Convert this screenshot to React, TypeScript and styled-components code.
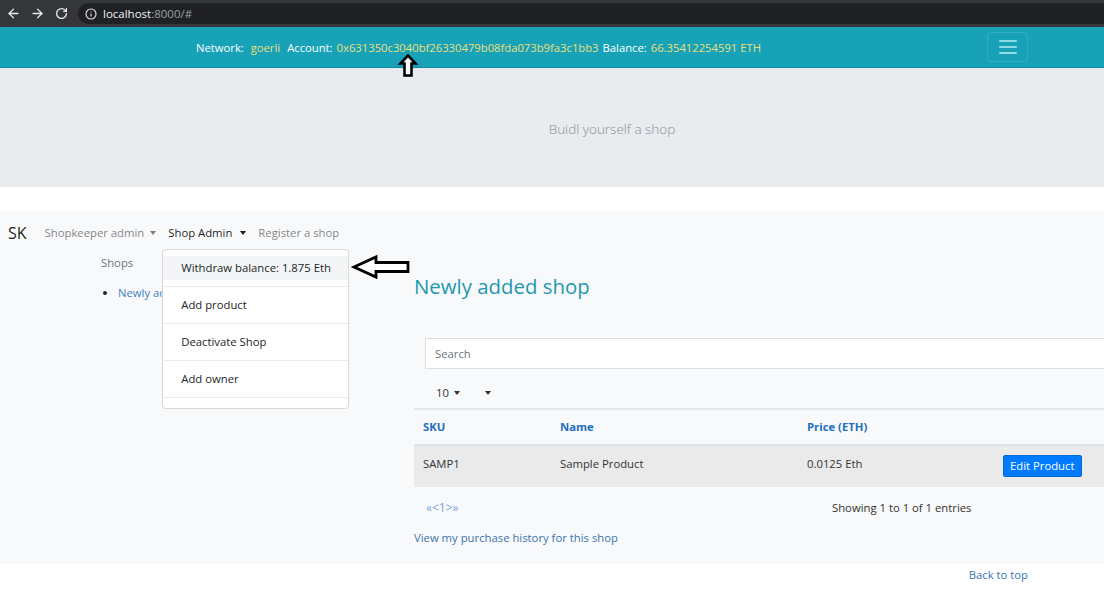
import React from 'react';
import styled, { createGlobalStyle } from 'styled-components';
import { ArrowLeft, ArrowRight, RotateCw, Info } from 'lucide-react';

const GlobalStyle = createGlobalStyle`
  html, body {
    margin: 0;
    padding: 0;
  }
  body {
    width: 1104px;
    height: 596px;
    overflow: hidden;
    background: #fff;
    color: #212529;
    font-family: 'Open Sans', 'Noto Sans', sans-serif;
    font-size: 11.3px;
  }
  * {
    box-sizing: border-box;
  }
`;

const Page = styled.div`
  position: relative;
  width: 1104px;
`;

/* browser chrome */
const BrowserBar = styled.div`
  height: 27px;
  background: #35363a;
  display: flex;
  align-items: center;
  padding-left: 1px;
`;

const ChromeButton = styled.span`
  width: 24px;
  display: flex;
  justify-content: center;
  color: #e8eaed;
`;

const Omnibox = styled.div`
  flex: 1;
  height: 21px;
  margin-left: 5px;
  border-radius: 11px 0 0 11px;
  background: #202124;
  display: flex;
  align-items: center;
  gap: 6px;
  padding-left: 7px;
  color: #e8eaed;
  font-size: 11.5px;
`;

const Host = styled.span`
  color: #f1f3f4;
`;

const UrlRest = styled.span`
  color: #9aa0a6;
`;

/* top navbar */
const TopNav = styled.nav`
  height: 41px;
  background: #17a2b8;
  border-bottom: 1px solid #12899c;
  display: flex;
  align-items: center;
  padding: 0 76px 0 196px;
  color: #fff;
  font-size: 11.25px;
`;

const NavLabel = styled.span`
  margin-right: 4px;
`;

const NavValue = styled.span<{ $gap?: number }>`
  color: #ecdf78;
  margin-right: ${(p) => p.$gap ?? 4}px;
`;

const Toggler = styled.button`
  margin-left: auto;
  width: 41px;
  height: 30px;
  padding: 0;
  border: 1px solid rgba(255, 255, 255, 0.12);
  border-radius: 4px;
  background: transparent;
  display: flex;
  flex-direction: column;
  align-items: center;
  justify-content: center;
  gap: 4px;
`;

const TogglerBar = styled.span`
  width: 18px;
  height: 2px;
  border-radius: 1px;
  background: #8fdbe6;
`;

/* jumbotron */
const Jumbotron = styled.header`
  height: 119px;
  background: #e9ecef;
  display: flex;
  align-items: center;
  justify-content: center;
  padding: 3px 0 0 120px;
`;

const Lead = styled.p`
  margin: 0;
  font-size: 13.5px;
  font-weight: 300;
  color: #868e96;
`;

/* shop section */
const ShopSection = styled.section`
  margin-top: 24px;
  background: #f8f9fa;
  padding-bottom: 18px;
`;

const NavRow = styled.div`
  display: flex;
  align-items: center;
  padding: 8px 0 8px 8px;
`;

const Brand = styled.span`
  font-size: 16px;
  line-height: 20px;
  color: rgba(0, 0, 0, 0.9);
  margin-right: 12px;
`;

const NavItem = styled.div`
  position: relative;
`;

const NavLink = styled.a<{ $active?: boolean }>`
  display: flex;
  align-items: center;
  padding: 6px;
  line-height: 16px;
  color: ${(p) => (p.$active ? 'rgba(0, 0, 0, 0.9)' : 'rgba(0, 0, 0, 0.5)')};
  text-decoration: none;
  white-space: nowrap;
  cursor: pointer;
`;

const Caret = styled.span<{ $gap?: number }>`
  display: inline-block;
  margin-left: ${(p) => p.$gap ?? 6}px;
  border-top: 4px solid currentColor;
  border-left: 3.5px solid transparent;
  border-right: 3.5px solid transparent;
`;

const Dropdown = styled.div`
  position: absolute;
  top: calc(100% + 2px);
  left: 0;
  z-index: 10;
  width: 187px;
  background: #fff;
  border: 1px solid rgba(0, 0, 0, 0.15);
  border-radius: 4px;
`;

const DropItem = styled.div`
  padding: 6px 0;
  border-bottom: 1px solid #e9ecef;
`;

const DropLink = styled.a<{ $active?: boolean }>`
  display: block;
  padding: 4px 18px;
  line-height: 16px;
  white-space: nowrap;
  color: #212529;
  text-decoration: none;
  background: ${(p) => (p.$active ? '#f4f5f6' : 'transparent')};
`;

const DropTail = styled.div`
  height: 10px;
`;

const ContentRow = styled.div`
  display: flex;
`;

const Sidebar = styled.aside`
  width: 414px;
  flex-shrink: 0;
  padding-left: 101px;
`;

const SidebarTitle = styled.div`
  line-height: 16px;
  color: #6c757d;
`;

const ShopList = styled.ul`
  margin: 14px 0 0;
  padding-left: 17px;
  line-height: 16px;
`;

/* the open dropdown hides the rest of this link */
const ShopLink = styled.a`
  display: inline-block;
  max-width: 44px;
  overflow: hidden;
  white-space: nowrap;
  vertical-align: top;
  color: #3d7fc1;
  text-decoration: none;
`;

const Main = styled.main`
  width: 720px;
  flex-shrink: 0;
`;

const ShopTitle = styled.h2`
  margin: 19px 0 0;
  font-size: 20.4px;
  line-height: 24px;
  font-weight: 400;
  color: #2398ae;
`;

const SearchInput = styled.input`
  display: block;
  margin: 40px 0 0 11px;
  width: 700px;
  height: 31px;
  padding: 0 9px;
  border: 1px solid #dcdfe2;
  border-radius: 0;
  background: #fff;
  font: inherit;
  outline: none;
  &::placeholder {
    color: #6c757d;
  }
`;

const PageSize = styled.div`
  display: flex;
  align-items: center;
  margin: 16px 0 7px;
  padding-left: 22px;
  line-height: 16px;
  color: #333;
`;

const Table = styled.table`
  width: 700px;
  border-collapse: separate;
  border-spacing: 0;
  table-layout: fixed;
`;

const Th = styled.th<{ $w?: number }>`
  width: ${(p) => (p.$w ? `${p.$w}px` : 'auto')};
  padding: 9px;
  line-height: 16px;
  text-align: left;
  font-weight: 700;
  color: #1e6fc0;
  border-top: 2px solid #e5e7ea;
  border-bottom: 2px solid #dee2e6;
`;

const Tr = styled.tr<{ $striped?: boolean }>`
  background: ${(p) => (p.$striped ? '#eaeaea' : 'transparent')};
`;

const Td = styled.td`
  padding: 10px 9px;
  line-height: 16px;
  vertical-align: top;
  color: #333;
`;

const EditButton = styled.button`
  height: 22px;
  margin-top: -1px;
  padding: 0 6px;
  border: 1px solid #0069d9;
  border-radius: 2px;
  background: #007bff;
  color: #fff;
  font: inherit;
  line-height: 20px;
`;

const TableFooter = styled.div`
  display: flex;
  margin-top: 13px;
  line-height: 16px;
`;

const Pager = styled.span`
  width: 406px;
  margin-left: 12px;
  font-size: 12px;
  color: #7aa6d6;
`;

const Summary = styled.span`
  color: #333;
`;

const HistoryLink = styled.a`
  display: block;
  margin-top: 14px;
  line-height: 16px;
  color: #3a74b0;
  text-decoration: none;
`;

const BackToTop = styled.a`
  display: block;
  margin-top: 3px;
  padding-right: 76px;
  text-align: right;
  line-height: 16px;
  color: #3b76b5;
  text-decoration: none;
`;

/* screenshot annotations */
const Annotation = styled.svg<{ $x: number; $y: number }>`
  position: absolute;
  left: ${(p) => p.$x}px;
  top: ${(p) => p.$y}px;
  z-index: 20;
  overflow: visible;
`;

const menuItems = ['Withdraw balance: 1.875 Eth', 'Add product', 'Deactivate Shop', 'Add owner'];

export default function App() {
  return (
    <Page>
      <GlobalStyle />
      <BrowserBar>
        <ChromeButton><ArrowLeft size={15} strokeWidth={2.2} /></ChromeButton>
        <ChromeButton><ArrowRight size={15} strokeWidth={2.2} /></ChromeButton>
        <ChromeButton><RotateCw size={13} strokeWidth={2.4} /></ChromeButton>
        <Omnibox>
          <Info size={12} strokeWidth={2.2} />
          <span>
            <Host>localhost</Host>
            <UrlRest>:8000/#</UrlRest>
          </span>
        </Omnibox>
      </BrowserBar>

      <TopNav>
        <NavLabel>Network:</NavLabel>
        <NavValue $gap={7}>&nbsp;goerli</NavValue>
        <NavLabel>Account:</NavLabel>
        <NavValue>0x631350c3040bf26330479b08fda073b9fa3c1bb3</NavValue>
        <NavLabel>Balance:</NavLabel>
        <NavValue>66.35412254591 ETH</NavValue>
        <Toggler aria-label="menu">
          <TogglerBar />
          <TogglerBar />
          <TogglerBar />
        </Toggler>
      </TopNav>

      <Jumbotron>
        <Lead>Buidl yourself a shop</Lead>
      </Jumbotron>

      <ShopSection>
        <NavRow>
          <Brand>SK</Brand>
          <NavItem>
            <NavLink>Shopkeeper admin<Caret /></NavLink>
          </NavItem>
          <NavItem>
            <NavLink $active>Shop Admin<Caret $gap={8} /></NavLink>
            <Dropdown>
              {menuItems.map((item, i) => (
                <DropItem key={item}>
                  <DropLink $active={i === 0}>{item}</DropLink>
                </DropItem>
              ))}
              <DropTail />
            </Dropdown>
          </NavItem>
          <NavItem>
            <NavLink>Register a shop</NavLink>
          </NavItem>
        </NavRow>

        <ContentRow>
          <Sidebar>
            <SidebarTitle>Shops</SidebarTitle>
            <ShopList>
              <li><ShopLink>Newly added shop</ShopLink></li>
            </ShopList>
          </Sidebar>

          <Main>
            <ShopTitle>Newly added shop</ShopTitle>
            <SearchInput placeholder="Search" />
            <PageSize>
              10<Caret $gap={5} /><Caret $gap={25} />
            </PageSize>
            <Table>
              <thead>
                <tr>
                  <Th $w={137}>SKU</Th>
                  <Th $w={247}>Name</Th>
                  <Th $w={196}>Price (ETH)</Th>
                  <Th />
                </tr>
              </thead>
              <tbody>
                <Tr $striped>
                  <Td>SAMP1</Td>
                  <Td>Sample Product</Td>
                  <Td>0.0125 Eth</Td>
                  <Td><EditButton>Edit Product</EditButton></Td>
                </Tr>
              </tbody>
            </Table>
            <TableFooter>
              <Pager>«&lt;1&gt;»</Pager>
              <Summary>Showing 1 to 1 of 1 entries</Summary>
            </TableFooter>
            <HistoryLink>View my purchase history for this shop</HistoryLink>
          </Main>
        </ContentRow>
      </ShopSection>

      <BackToTop>Back to top</BackToTop>

      <Annotation $x={399} $y={54} width="18" height="23" viewBox="0 0 18 23">
        <path
          d="M9 1.5 L16.5 9.5 L12.5 9.5 L12.5 21.5 L5.5 21.5 L5.5 9.5 L1.5 9.5 Z"
          fill="#fff"
          stroke="#000"
          strokeWidth="2.6"
          strokeLinejoin="miter"
        />
      </Annotation>
      <Annotation $x={352} $y={255} width="58" height="24" viewBox="0 0 58 24">
        <path
          d="M2 12 L24 2 L24 7.5 L56 7.5 L56 16.5 L24 16.5 L24 22 Z"
          fill="#fff"
          stroke="#000"
          strokeWidth="2.8"
          strokeLinejoin="miter"
        />
      </Annotation>
    </Page>
  );
}
